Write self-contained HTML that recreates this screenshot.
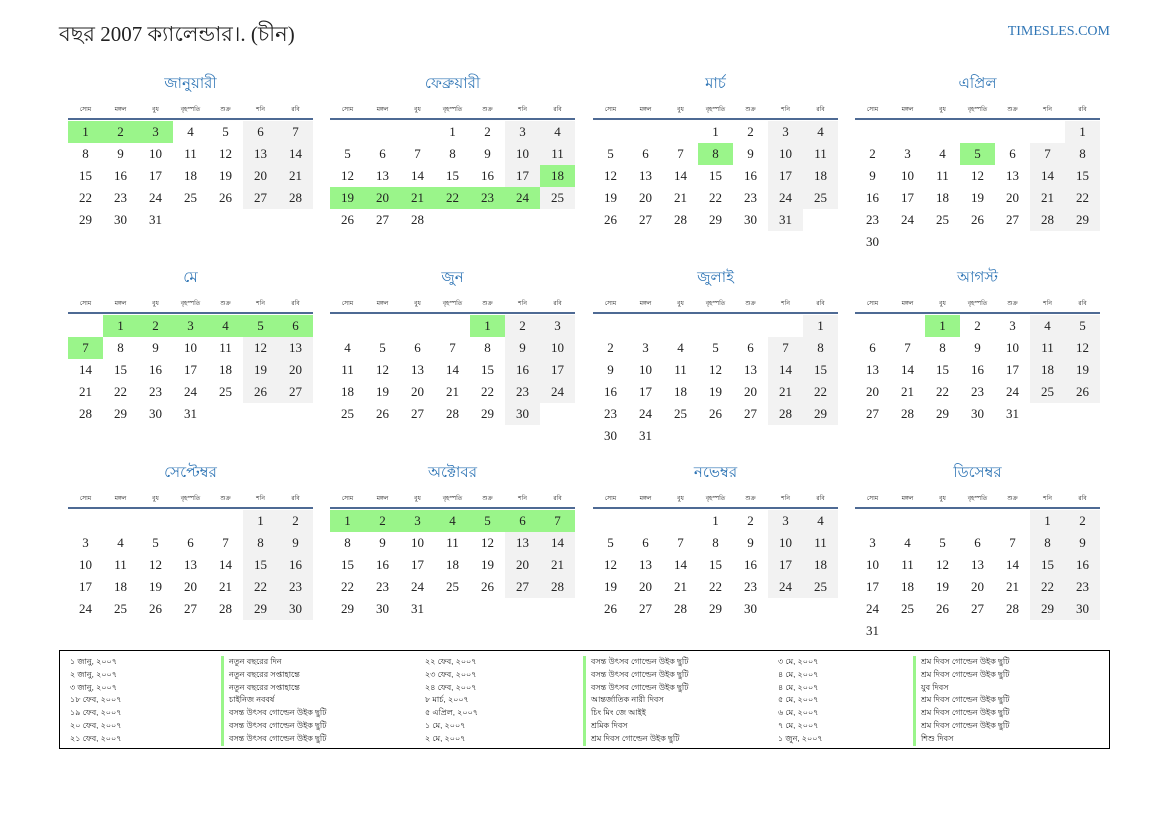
<!DOCTYPE html>
<html><head><meta charset="utf-8">
<style>
body{margin:0;width:1169px;height:827px;background:#fff;position:relative;font-family:"Liberation Serif",serif;color:#222;overflow:hidden}
.t{position:absolute;left:59px;top:18px;font-size:21px;color:#222}
.brand{position:absolute;right:59px;top:24px;font-size:14px;color:#2f75b5}
.m{position:absolute;width:245px}
.mt{height:16px;line-height:16px;text-align:center;font-size:15px;color:#2f75b5;font-family:"Liberation Sans",sans-serif}
.dh{margin-top:12px;height:10px;display:flex;font-size:6px;font-family:"Liberation Sans",sans-serif}
.dh span{width:35px;text-align:center}
.ln{margin-top:4px;height:2px;background:#4e6a94;margin-bottom:1px}
.r{display:flex;height:22px}
.r span{width:35px;height:22px;line-height:22px;text-align:center;font-size:13px}
.w{background:#f2f2f2}
.h{background:#9af58a}
.hb{position:absolute;left:59px;top:650px;width:1049px;height:97px;border:1px solid #000}
.c{position:absolute;top:5px;font-size:8px;line-height:12.8px;font-family:"Liberation Sans",sans-serif;white-space:nowrap}
.bar{border-left:3px solid #9af58a;padding-left:5px}
</style></head><body>
<div class="t">বছর 2007 ক্যালেন্ডার।. (চীন)</div>
<div class="brand">TIMESLES.COM</div>

<div class="m" style="left:68px;top:76px"><div class="mt">জানুয়ারী</div><div class="dh"><span>সোম</span><span>মঙ্গল</span><span>বুধ</span><span>বৃহস্পতি</span><span>শুক্র</span><span>শনি</span><span>রবি</span></div><div class="ln"></div>
<div class="r"><span class="h">1</span><span class="h">2</span><span class="h">3</span><span>4</span><span>5</span><span class="w">6</span><span class="w">7</span></div>
<div class="r"><span>8</span><span>9</span><span>10</span><span>11</span><span>12</span><span class="w">13</span><span class="w">14</span></div>
<div class="r"><span>15</span><span>16</span><span>17</span><span>18</span><span>19</span><span class="w">20</span><span class="w">21</span></div>
<div class="r"><span>22</span><span>23</span><span>24</span><span>25</span><span>26</span><span class="w">27</span><span class="w">28</span></div>
<div class="r"><span>29</span><span>30</span><span>31</span></div></div>

<div class="m" style="left:330px;top:76px"><div class="mt">ফেব্রুয়ারী</div><div class="dh"><span>সোম</span><span>মঙ্গল</span><span>বুধ</span><span>বৃহস্পতি</span><span>শুক্র</span><span>শনি</span><span>রবি</span></div><div class="ln"></div>
<div class="r"><span></span><span></span><span></span><span>1</span><span>2</span><span class="w">3</span><span class="w">4</span></div>
<div class="r"><span>5</span><span>6</span><span>7</span><span>8</span><span>9</span><span class="w">10</span><span class="w">11</span></div>
<div class="r"><span>12</span><span>13</span><span>14</span><span>15</span><span>16</span><span class="w">17</span><span class="h">18</span></div>
<div class="r"><span class="h">19</span><span class="h">20</span><span class="h">21</span><span class="h">22</span><span class="h">23</span><span class="h">24</span><span class="w">25</span></div>
<div class="r"><span>26</span><span>27</span><span>28</span></div></div>

<div class="m" style="left:593px;top:76px"><div class="mt">মার্চ</div><div class="dh"><span>সোম</span><span>মঙ্গল</span><span>বুধ</span><span>বৃহস্পতি</span><span>শুক্র</span><span>শনি</span><span>রবি</span></div><div class="ln"></div>
<div class="r"><span></span><span></span><span></span><span>1</span><span>2</span><span class="w">3</span><span class="w">4</span></div>
<div class="r"><span>5</span><span>6</span><span>7</span><span class="h">8</span><span>9</span><span class="w">10</span><span class="w">11</span></div>
<div class="r"><span>12</span><span>13</span><span>14</span><span>15</span><span>16</span><span class="w">17</span><span class="w">18</span></div>
<div class="r"><span>19</span><span>20</span><span>21</span><span>22</span><span>23</span><span class="w">24</span><span class="w">25</span></div>
<div class="r"><span>26</span><span>27</span><span>28</span><span>29</span><span>30</span><span class="w">31</span></div></div>

<div class="m" style="left:855px;top:76px"><div class="mt">এপ্রিল</div><div class="dh"><span>সোম</span><span>মঙ্গল</span><span>বুধ</span><span>বৃহস্পতি</span><span>শুক্র</span><span>শনি</span><span>রবি</span></div><div class="ln"></div>
<div class="r"><span></span><span></span><span></span><span></span><span></span><span></span><span class="w">1</span></div>
<div class="r"><span>2</span><span>3</span><span>4</span><span class="h">5</span><span>6</span><span class="w">7</span><span class="w">8</span></div>
<div class="r"><span>9</span><span>10</span><span>11</span><span>12</span><span>13</span><span class="w">14</span><span class="w">15</span></div>
<div class="r"><span>16</span><span>17</span><span>18</span><span>19</span><span>20</span><span class="w">21</span><span class="w">22</span></div>
<div class="r"><span>23</span><span>24</span><span>25</span><span>26</span><span>27</span><span class="w">28</span><span class="w">29</span></div>
<div class="r"><span>30</span></div></div>

<div class="m" style="left:68px;top:270px"><div class="mt">মে</div><div class="dh"><span>সোম</span><span>মঙ্গল</span><span>বুধ</span><span>বৃহস্পতি</span><span>শুক্র</span><span>শনি</span><span>রবি</span></div><div class="ln"></div>
<div class="r"><span></span><span class="h">1</span><span class="h">2</span><span class="h">3</span><span class="h">4</span><span class="h">5</span><span class="h">6</span></div>
<div class="r"><span class="h">7</span><span>8</span><span>9</span><span>10</span><span>11</span><span class="w">12</span><span class="w">13</span></div>
<div class="r"><span>14</span><span>15</span><span>16</span><span>17</span><span>18</span><span class="w">19</span><span class="w">20</span></div>
<div class="r"><span>21</span><span>22</span><span>23</span><span>24</span><span>25</span><span class="w">26</span><span class="w">27</span></div>
<div class="r"><span>28</span><span>29</span><span>30</span><span>31</span></div></div>

<div class="m" style="left:330px;top:270px"><div class="mt">জুন</div><div class="dh"><span>সোম</span><span>মঙ্গল</span><span>বুধ</span><span>বৃহস্পতি</span><span>শুক্র</span><span>শনি</span><span>রবি</span></div><div class="ln"></div>
<div class="r"><span></span><span></span><span></span><span></span><span class="h">1</span><span class="w">2</span><span class="w">3</span></div>
<div class="r"><span>4</span><span>5</span><span>6</span><span>7</span><span>8</span><span class="w">9</span><span class="w">10</span></div>
<div class="r"><span>11</span><span>12</span><span>13</span><span>14</span><span>15</span><span class="w">16</span><span class="w">17</span></div>
<div class="r"><span>18</span><span>19</span><span>20</span><span>21</span><span>22</span><span class="w">23</span><span class="w">24</span></div>
<div class="r"><span>25</span><span>26</span><span>27</span><span>28</span><span>29</span><span class="w">30</span></div></div>

<div class="m" style="left:593px;top:270px"><div class="mt">জুলাই</div><div class="dh"><span>সোম</span><span>মঙ্গল</span><span>বুধ</span><span>বৃহস্পতি</span><span>শুক্র</span><span>শনি</span><span>রবি</span></div><div class="ln"></div>
<div class="r"><span></span><span></span><span></span><span></span><span></span><span></span><span class="w">1</span></div>
<div class="r"><span>2</span><span>3</span><span>4</span><span>5</span><span>6</span><span class="w">7</span><span class="w">8</span></div>
<div class="r"><span>9</span><span>10</span><span>11</span><span>12</span><span>13</span><span class="w">14</span><span class="w">15</span></div>
<div class="r"><span>16</span><span>17</span><span>18</span><span>19</span><span>20</span><span class="w">21</span><span class="w">22</span></div>
<div class="r"><span>23</span><span>24</span><span>25</span><span>26</span><span>27</span><span class="w">28</span><span class="w">29</span></div>
<div class="r"><span>30</span><span>31</span></div></div>

<div class="m" style="left:855px;top:270px"><div class="mt">আগস্ট</div><div class="dh"><span>সোম</span><span>মঙ্গল</span><span>বুধ</span><span>বৃহস্পতি</span><span>শুক্র</span><span>শনি</span><span>রবি</span></div><div class="ln"></div>
<div class="r"><span></span><span></span><span class="h">1</span><span>2</span><span>3</span><span class="w">4</span><span class="w">5</span></div>
<div class="r"><span>6</span><span>7</span><span>8</span><span>9</span><span>10</span><span class="w">11</span><span class="w">12</span></div>
<div class="r"><span>13</span><span>14</span><span>15</span><span>16</span><span>17</span><span class="w">18</span><span class="w">19</span></div>
<div class="r"><span>20</span><span>21</span><span>22</span><span>23</span><span>24</span><span class="w">25</span><span class="w">26</span></div>
<div class="r"><span>27</span><span>28</span><span>29</span><span>30</span><span>31</span></div></div>

<div class="m" style="left:68px;top:465px"><div class="mt">সেপ্টেম্বর</div><div class="dh"><span>সোম</span><span>মঙ্গল</span><span>বুধ</span><span>বৃহস্পতি</span><span>শুক্র</span><span>শনি</span><span>রবি</span></div><div class="ln"></div>
<div class="r"><span></span><span></span><span></span><span></span><span></span><span class="w">1</span><span class="w">2</span></div>
<div class="r"><span>3</span><span>4</span><span>5</span><span>6</span><span>7</span><span class="w">8</span><span class="w">9</span></div>
<div class="r"><span>10</span><span>11</span><span>12</span><span>13</span><span>14</span><span class="w">15</span><span class="w">16</span></div>
<div class="r"><span>17</span><span>18</span><span>19</span><span>20</span><span>21</span><span class="w">22</span><span class="w">23</span></div>
<div class="r"><span>24</span><span>25</span><span>26</span><span>27</span><span>28</span><span class="w">29</span><span class="w">30</span></div></div>

<div class="m" style="left:330px;top:465px"><div class="mt">অক্টোবর</div><div class="dh"><span>সোম</span><span>মঙ্গল</span><span>বুধ</span><span>বৃহস্পতি</span><span>শুক্র</span><span>শনি</span><span>রবি</span></div><div class="ln"></div>
<div class="r"><span class="h">1</span><span class="h">2</span><span class="h">3</span><span class="h">4</span><span class="h">5</span><span class="h">6</span><span class="h">7</span></div>
<div class="r"><span>8</span><span>9</span><span>10</span><span>11</span><span>12</span><span class="w">13</span><span class="w">14</span></div>
<div class="r"><span>15</span><span>16</span><span>17</span><span>18</span><span>19</span><span class="w">20</span><span class="w">21</span></div>
<div class="r"><span>22</span><span>23</span><span>24</span><span>25</span><span>26</span><span class="w">27</span><span class="w">28</span></div>
<div class="r"><span>29</span><span>30</span><span>31</span></div></div>

<div class="m" style="left:593px;top:465px"><div class="mt">নভেম্বর</div><div class="dh"><span>সোম</span><span>মঙ্গল</span><span>বুধ</span><span>বৃহস্পতি</span><span>শুক্র</span><span>শনি</span><span>রবি</span></div><div class="ln"></div>
<div class="r"><span></span><span></span><span></span><span>1</span><span>2</span><span class="w">3</span><span class="w">4</span></div>
<div class="r"><span>5</span><span>6</span><span>7</span><span>8</span><span>9</span><span class="w">10</span><span class="w">11</span></div>
<div class="r"><span>12</span><span>13</span><span>14</span><span>15</span><span>16</span><span class="w">17</span><span class="w">18</span></div>
<div class="r"><span>19</span><span>20</span><span>21</span><span>22</span><span>23</span><span class="w">24</span><span class="w">25</span></div>
<div class="r"><span>26</span><span>27</span><span>28</span><span>29</span><span>30</span></div></div>

<div class="m" style="left:855px;top:465px"><div class="mt">ডিসেম্বর</div><div class="dh"><span>সোম</span><span>মঙ্গল</span><span>বুধ</span><span>বৃহস্পতি</span><span>শুক্র</span><span>শনি</span><span>রবি</span></div><div class="ln"></div>
<div class="r"><span></span><span></span><span></span><span></span><span></span><span class="w">1</span><span class="w">2</span></div>
<div class="r"><span>3</span><span>4</span><span>5</span><span>6</span><span>7</span><span class="w">8</span><span class="w">9</span></div>
<div class="r"><span>10</span><span>11</span><span>12</span><span>13</span><span>14</span><span class="w">15</span><span class="w">16</span></div>
<div class="r"><span>17</span><span>18</span><span>19</span><span>20</span><span>21</span><span class="w">22</span><span class="w">23</span></div>
<div class="r"><span>24</span><span>25</span><span>26</span><span>27</span><span>28</span><span class="w">29</span><span class="w">30</span></div>
<div class="r"><span>31</span></div></div>

<div class="hb">
<div class="c" style="left:10px">১ জানু, ২০০৭<br>২ জানু, ২০০৭<br>৩ জানু, ২০০৭<br>১৮ ফেব, ২০০৭<br>১৯ ফেব, ২০০৭<br>২০ ফেব, ২০০৭<br>২১ ফেব, ২০০৭</div>
<div class="c bar" style="left:161px">নতুন বছরের দিন<br>নতুন বছরের সপ্তাহান্তে<br>নতুন বছরের সপ্তাহান্তে<br>চাইনিজ নববর্ষ<br>বসন্ত উৎসব গোল্ডেন উইক ছুটি<br>বসন্ত উৎসব গোল্ডেন উইক ছুটি<br>বসন্ত উৎসব গোল্ডেন উইক ছুটি</div>
<div class="c" style="left:365px">২২ ফেব, ২০০৭<br>২৩ ফেব, ২০০৭<br>২৪ ফেব, ২০০৭<br>৮ মার্চ, ২০০৭<br>৫ এপ্রিল, ২০০৭<br>১ মে, ২০০৭<br>২ মে, ২০০৭</div>
<div class="c bar" style="left:523px">বসন্ত উৎসব গোল্ডেন উইক ছুটি<br>বসন্ত উৎসব গোল্ডেন উইক ছুটি<br>বসন্ত উৎসব গোল্ডেন উইক ছুটি<br>আন্তর্জাতিক নারী দিবস<br>চিং মিং জে আইই<br>শ্রমিক দিবস<br>শ্রম দিবস গোল্ডেন উইক ছুটি</div>
<div class="c" style="left:718px">৩ মে, ২০০৭<br>৪ মে, ২০০৭<br>৪ মে, ২০০৭<br>৫ মে, ২০০৭<br>৬ মে, ২০০৭<br>৭ মে, ২০০৭<br>১ জুন, ২০০৭</div>
<div class="c bar" style="left:853px">শ্রম দিবস গোল্ডেন উইক ছুটি<br>শ্রম দিবস গোল্ডেন উইক ছুটি<br>যুব দিবস<br>শ্রম দিবস গোল্ডেন উইক ছুটি<br>শ্রম দিবস গোল্ডেন উইক ছুটি<br>শ্রম দিবস গোল্ডেন উইক ছুটি<br>শিশু দিবস</div>
</div>
</body></html>
